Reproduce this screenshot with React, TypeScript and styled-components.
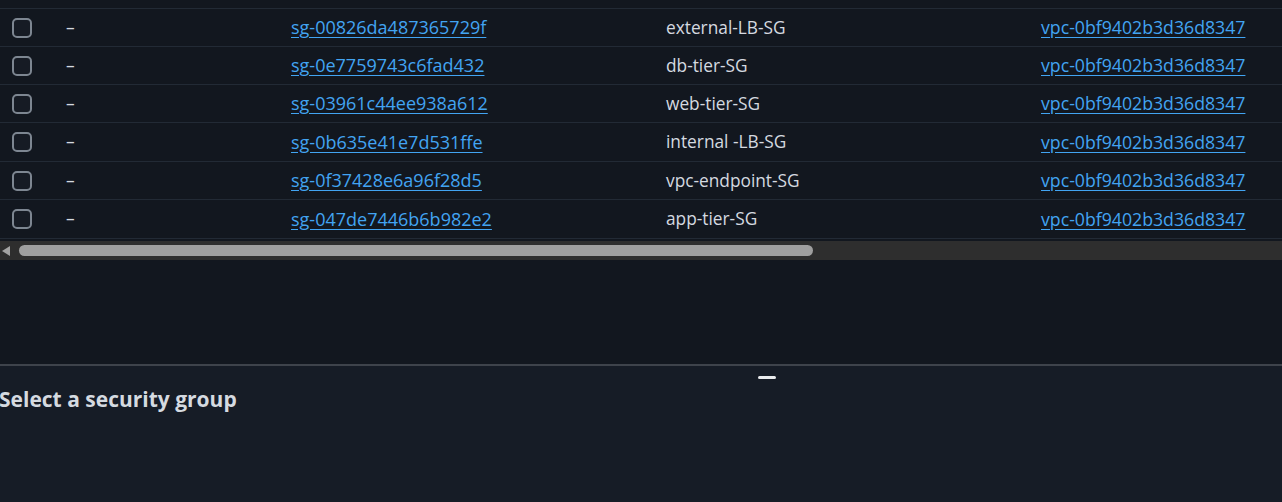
import React from "react";
import styled, { createGlobalStyle } from "styled-components";

const Global = createGlobalStyle`
  html, body { margin: 0; padding: 0; background: #12171f; }
  body { font-family: "Open Sans", "Noto Sans", sans-serif; overflow: hidden; }
  #root { width: 1282px; height: 502px; }
`;

const Page = styled.div`
  width: 1282px;
  height: 502px;
  display: flex;
  flex-direction: column;
  overflow: hidden;
`;

const TableArea = styled.div`
  height: 364px;
  background: #12171f;
  display: flex;
  flex-direction: column;
  padding-top: 8px;
  box-sizing: border-box;
`;

const Table = styled.div`
  display: flex;
  flex-direction: column;
  border-top: 1px solid #222a35;
`;

const Row = styled.div`
  height: 37px;
  border-bottom: 1px solid #222a35;
  display: grid;
  grid-template-columns: 66px 225px 375px 375px 1fr;
  align-items: center;
  font-size: 17.3px;
  line-height: 20px;
  color: #d5dae0;
  &:nth-child(4), &:nth-child(6) { height: 38px; }
`;

const CheckCell = styled.div`
  padding-left: 12px;
  display: flex;
  align-items: center;
`;

const Checkbox = styled.span`
  width: 16px;
  height: 16px;
  border: 2px solid #7d8691;
  border-radius: 5px;
  box-sizing: content-box;
  background: #161b24;
`;

const Dash = styled.span`
  color: #d5dae0;
`;

const Link = styled.a<{ $size: number }>`
  color: #42a4f2;
  font-size: ${(p) => p.$size}px;
  text-decoration: underline;
  text-underline-offset: 3px;
  cursor: pointer;
`;

const Text = styled.span`
  color: #d5dae0;
`;

const ScrollBar = styled.div`
  margin-top: 2px;
  height: 19px;
  background: #2e2e2e;
  display: flex;
  align-items: center;
`;

const Arrow = styled.span`
  width: 0;
  height: 0;
  margin-left: 2px;
  border-top: 5px solid transparent;
  border-bottom: 5px solid transparent;
  border-right: 8px solid #a3a3a3;
`;

const Thumb = styled.div`
  margin-left: 9px;
  width: 794px;
  height: 11px;
  border-radius: 6px;
  background: #9f9f9f;
`;

const Panel = styled.div`
  flex: 1;
  background: #161c26;
  border-top: 2px solid #3e434b;
  display: flex;
  flex-direction: column;
`;

const HandleRow = styled.div`
  display: flex;
  justify-content: center;
  padding-top: 10px;
  padding-left: 252px;
`;

const Handle = styled.span`
  width: 18px;
  height: 3px;
  border-radius: 2px;
  background: #e9ebed;
`;

const Title = styled.h2`
  margin: 7px 0 0 -1px;
  font-size: 21px;
  font-weight: 700;
  color: #d5dae0;
  line-height: 26px;
`;

const rows = [
  ["sg-00826da487365729f", "external-LB-SG"],
  ["sg-0e7759743c6fad432", "db-tier-SG"],
  ["sg-03961c44ee938a612", "web-tier-SG"],
  ["sg-0b635e41e7d531ffe", "internal -LB-SG"],
  ["sg-0f37428e6a96f28d5", "vpc-endpoint-SG"],
  ["sg-047de7446b6b982e2", "app-tier-SG"],
];

export default function App() {
  return (
    <Page>
      <Global />
      <TableArea>
        <Table>
          {rows.map(([id, name]) => (
            <Row key={id}>
              <CheckCell>
                <Checkbox />
              </CheckCell>
              <Dash>–</Dash>
              <span>
                <Link $size={18}>{id}</Link>
              </span>
              <Text>{name}</Text>
              <span>
                <Link $size={17.7}>vpc-0bf9402b3d36d8347</Link>
              </span>
            </Row>
          ))}
        </Table>
        <ScrollBar>
          <Arrow />
          <Thumb />
        </ScrollBar>
      </TableArea>
      <Panel>
        <HandleRow>
          <Handle />
        </HandleRow>
        <Title>Select a security group</Title>
      </Panel>
    </Page>
  );
}
